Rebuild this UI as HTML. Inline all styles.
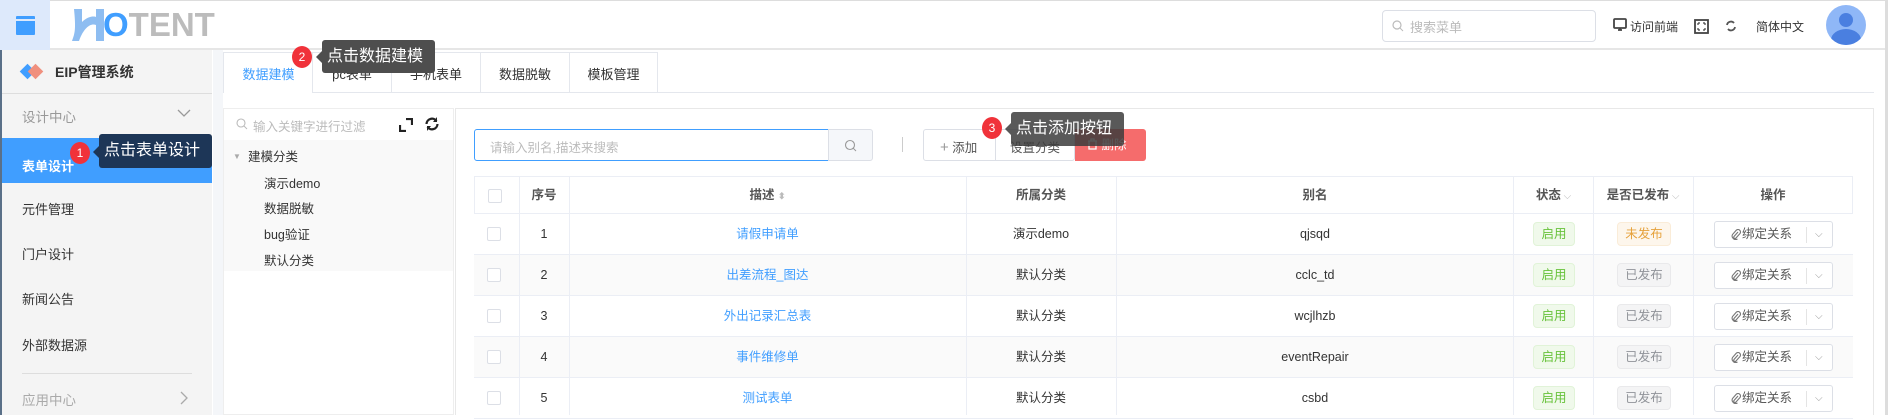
<!DOCTYPE html>
<html><head><meta charset="utf-8"><style>
*{box-sizing:border-box;margin:0;padding:0}
body{width:1888px;height:415px;overflow:hidden;background:#fff;font-family:"Liberation Sans","Noto Sans CJK SC",sans-serif;font-size:13px;color:#333;position:relative}
.a{position:absolute}
.hdr{left:0;top:0;width:1888px;height:50px;background:#fff;border-bottom:2px solid #e6e6e6;border-top:1px solid #ddd}
.side{left:0;top:50px;width:212px;height:365px;background:#f4f4f4;border-left:2px solid #5a7088}
.si{position:absolute;left:22px;font-size:13px;color:#333}
.tab{position:absolute;top:52px;height:41px;border:1px solid #e4e7ed;border-bottom:none;text-align:center;line-height:44px;color:#333;font-size:13px;background:#fff}
.th{position:absolute;top:177px;height:37px;line-height:37px;text-align:center;color:#555;font-weight:bold;font-size:12.5px}
.row{position:absolute;left:474px;width:1379px;height:41px;border-bottom:1px solid #ebeef5}
.c{position:absolute;top:0;height:40px;line-height:40px;text-align:center;font-size:12.5px;color:#333}
.vl{position:absolute;top:177px;height:238px;width:1px;background:#ebeef5}
.cb{position:absolute;left:13px;top:13px;width:14px;height:14px;border:1px solid #dcdfe6;border-radius:2px;background:#fff}
.tag{position:absolute;height:24px;line-height:22px;border:1px solid;border-radius:4px;font-size:12.5px;text-align:center}
.bind{position:absolute;left:1240px;top:7px;width:119px;height:27px;border:1px solid #dcdfe6;border-radius:3px;background:#fff;font-size:12.5px;color:#555;line-height:25px}
.bind svg{position:absolute;left:16px;top:7px}
.tip{position:absolute;color:#fff;font-size:16px;border-radius:3px;line-height:33px;padding-left:5px}
.badge{position:absolute;width:20px;height:22px;border-radius:50%;background:#f0323a;color:#fff;font-size:12px;text-align:center;line-height:22px}
</style></head><body>
<div class="a hdr"></div>
<div class="a" style="left:0;top:0;width:50px;height:50px;background:#dde9fb"></div>
<div class="a" style="left:16px;top:16px;width:19px;height:19px;background:#409eff;border-radius:1px"></div>
<div class="a" style="left:16px;top:19px;width:19px;height:1.5px;background:#dde9fb"></div>
<svg class="a" style="left:68px;top:7px" width="40" height="36"><path d="M6 2h8v13c6-6 12-6 14-5V2h8v32h-8V18c-5-2-12 2-17 16H4c3-8 4-12 2-32z" fill="#7ab2ee" opacity=".85"/></svg>
<div class="a" style="left:103px;top:8px;font-size:33px;font-weight:bold;line-height:34px"><span style="color:#409eff">O</span><span style="color:#bcbcbc">TENT</span></div>
<div class="a" style="left:1382px;top:10px;width:214px;height:32px;border:1px solid #dcdfe6;border-radius:4px"></div>
<svg class="a" style="left:1392px;top:20px" width="12" height="12"><circle cx="5" cy="5" r="4" stroke="#bbb" fill="none" stroke-width="1.2"/><path d="M8 8l3 3" stroke="#bbb"/></svg>
<div class="a" style="left:1410px;top:17px;color:#bbb;font-size:13px">搜索菜单</div>
<svg class="a" style="left:1613px;top:18px" width="14" height="14"><rect x="1" y="1" width="12" height="9" rx="1" fill="none" stroke="#444" stroke-width="1.8"/><path d="M5 12h4M7 10v2" stroke="#444" stroke-width="1.8"/></svg>
<div class="a" style="left:1630px;top:18px;font-size:12px;color:#333">访问前端</div>
<svg class="a" style="left:1694px;top:19px" width="15" height="15"><rect x="1" y="1" width="13" height="13" fill="none" stroke="#444" stroke-width="1.8"/><path d="M4 4h2M4 4v2M11 4h-2M11 4v2M4 11h2M4 11v-2M11 11h-2M11 11v-2" stroke="#444" stroke-width="1.2"/></svg>
<svg class="a" style="left:1725px;top:20px" width="12" height="12"><path d="M2 5a4 4 0 0 1 7-2M10 7a4 4 0 0 1-7 2" stroke="#555" stroke-width="1.8" fill="none"/></svg>
<div class="a" style="left:1756px;top:18px;font-size:12px;color:#333">简体中文</div>
<div class="a" style="left:1826px;top:5px;width:40px;height:40px;border-radius:50%;background:#8fb7f7;overflow:hidden"><div class="a" style="left:13px;top:8px;width:14px;height:14px;border-radius:50%;background:#4a7fe0"></div><div class="a" style="left:5px;top:24px;width:30px;height:22px;border-radius:50%;background:#4a7fe0"></div></div>
<div class="a" style="left:1885px;top:0;width:3px;height:415px;background:#ddd"></div>

<div class="a side"></div>
<div class="a" style="left:22px;top:66px;width:11px;height:11px;background:#409eff;transform:rotate(45deg)"></div>
<div class="a" style="left:30px;top:66px;width:11px;height:11px;background:#f0907e;transform:rotate(45deg)"></div>
<div class="si" style="left:55px;top:62px;font-weight:bold;font-size:14px">EIP管理系统</div>
<div class="a" style="left:2px;top:93px;width:210px;height:1px;background:#ddd"></div>
<div class="si" style="top:106px;color:#999;font-size:13.5px">设计中心</div>
<svg class="a" style="left:177px;top:109px" width="14" height="9"><path d="M1 1l6 6 6-6" stroke="#999" fill="none" stroke-width="1.3"/></svg>
<div class="a" style="left:2px;top:138px;width:210px;height:45px;background:#409eff"></div>
<div class="si" style="top:156px;color:#fff;font-weight:bold">表单设计</div>
<div class="si" style="top:199px">元件管理</div>
<div class="si" style="top:244px">门户设计</div>
<div class="si" style="top:289px">新闻公告</div>
<div class="si" style="top:335px">外部数据源</div>
<div class="a" style="left:22px;top:373px;width:170px;height:1px;background:#ddd"></div>
<div class="si" style="top:389px;color:#aaa;font-size:13.5px">应用中心</div>
<svg class="a" style="left:180px;top:391px" width="8" height="14"><path d="M1 1l6 6-6 6" stroke="#aaa" fill="none" stroke-width="1.3"/></svg>

<div class="a" style="left:213px;top:50px;width:10px;height:365px;background:#f4f6f9"></div>
<div class="tab" style="left:223px;width:90px;color:#409eff;border-right:none">数据建模</div>
<div class="tab" style="left:312px;width:80px;border-bottom:1px solid #e4e7ed">pc表单</div>
<div class="tab" style="left:391px;width:90px;border-bottom:1px solid #e4e7ed">手机表单</div>
<div class="tab" style="left:480px;width:90px;border-bottom:1px solid #e4e7ed">数据脱敏</div>
<div class="tab" style="left:569px;width:89px;border-bottom:1px solid #e4e7ed">模板管理</div>
<div class="a" style="left:658px;top:92px;width:1216px;height:1px;background:#e4e7ed"></div>

<div class="a" style="left:223px;top:108px;width:231px;height:307px;border:1px solid #eee;background:#fff"></div>
<div class="a" style="left:224px;top:140px;width:229px;height:131px;background:#f9f9f9"></div>
<svg class="a" style="left:236px;top:118px" width="12" height="12"><circle cx="5" cy="5" r="4" stroke="#bbb" fill="none" stroke-width="1.1"/><path d="M8 8l3 3" stroke="#bbb"/></svg>
<div class="a" style="left:253px;top:116px;color:#bbb;font-size:12.5px">输入关键字进行过滤</div>
<svg class="a" style="left:399px;top:118px" width="14" height="14"><path d="M1 7v6h6M13 7V1H7" stroke="#222" stroke-width="2.2" fill="none"/></svg>
<svg class="a" style="left:424px;top:116px" width="16" height="16"><path d="M2.5 8a5.5 5.5 0 0 1 10-3M13.5 8a5.5 5.5 0 0 1-10 3" stroke="#222" stroke-width="2.2" fill="none"/><path d="M13 1v5h-4z M3 15v-5h4z" fill="#222"/></svg>
<div class="a" style="left:233px;top:152px;color:#aaa;font-size:8px">▼</div>
<div class="a" style="left:248px;top:146px;font-size:12.5px">建模分类</div>
<div class="a" style="left:264px;top:173px;font-size:12.5px">演示demo</div>
<div class="a" style="left:264px;top:198px;font-size:12.5px">数据脱敏</div>
<div class="a" style="left:264px;top:224px;font-size:12.5px">bug验证</div>
<div class="a" style="left:264px;top:250px;font-size:12.5px">默认分类</div>

<div class="a" style="left:455px;top:108px;width:1419px;height:307px;border:1px solid #e8e8e8;border-bottom:none"></div>
<div class="a" style="left:474px;top:129px;width:355px;height:32px;border:1px solid #409eff;border-radius:3px 0 0 3px"></div>
<div class="a" style="left:490px;top:137px;color:#bbb;font-size:12.5px">请输入别名,描述来搜索</div>
<div class="a" style="left:828px;top:129px;width:45px;height:32px;border:1px solid #dcdfe6;background:#f5f7fa;border-radius:0 3px 3px 0"></div>
<svg class="a" style="left:844px;top:139px" width="13" height="13"><circle cx="6" cy="6" r="4.5" stroke="#999" fill="none" stroke-width="1.1"/><path d="M9 9l3 3" stroke="#999"/></svg>
<div class="a" style="left:902px;top:137px;width:1px;height:15px;background:#ccc"></div>
<div class="a" style="left:923px;top:129px;width:152px;height:32px;border:1px solid #dcdfe6;border-radius:3px;background:#fff"></div>
<div class="a" style="left:995px;top:129px;width:1px;height:32px;background:#dcdfe6"></div>
<div class="a" style="left:940px;top:137px;font-size:12.5px;color:#555"><span style="color:#999;font-size:15px">+</span> 添加</div>
<div class="a" style="left:1010px;top:137px;font-size:12.5px;color:#555">设置分类</div>
<div class="a" style="left:1075px;top:129px;width:71px;height:32px;background:#f56c6c;border-radius:0 3px 3px 0;color:#fff;font-size:12.5px;line-height:32px;padding-left:12px"><svg width="11" height="12" style="vertical-align:-1px"><path d="M1 3h9M4 3V1h3v2M2 3v8h7V3" stroke="#fff" fill="none" stroke-width="1.3"/></svg> 删除</div>

<div class="a" style="left:474px;top:176px;width:1379px;height:239px;border:1px solid #ebeef5;border-bottom:none"></div>
<div class="a" style="left:474px;top:213px;width:1379px;height:1px;background:#ebeef5"></div>
<div class="a" style="left:488px;top:189px;width:14px;height:14px;border:1px solid #dcdfe6;border-radius:2px"></div>
<div class="th" style="left:519px;width:50px">序号</div>
<div class="th" style="left:569px;width:397px">描述 <span style="color:#bbb;font-size:9px">⬍</span></div>
<div class="th" style="left:966px;width:150px">所属分类</div>
<div class="th" style="left:1116px;width:398px">别名</div>
<div class="th" style="left:1514px;width:79px">状态<span style="color:#bbb;font-weight:normal;font-size:10px"> ⌵</span></div>
<div class="th" style="left:1593px;width:100px">是否已发布<span style="color:#bbb;font-weight:normal;font-size:10px"> ⌵</span></div>
<div class="th" style="left:1693px;width:160px">操作</div>

<div class="row" style="top:214px;background:#fff"><div class="cb"></div><div class="c" style="left:45px;width:50px">1</div><div class="c" style="left:95px;width:397px;color:#409eff">请假申请单</div><div class="c" style="left:492px;width:150px">演示demo</div><div class="c" style="left:642px;width:398px">qjsqd</div><div class="tag" style="left:1059px;top:8px;width:42px;color:#67c23a;background:#f0f9eb;border-color:#e1f3d8">启用</div><div class="tag" style="left:1143px;top:8px;width:54px;color:#e6a23c;background:#fdf6ec;border-color:#faecd8">未发布</div><div class="bind"><svg width="10" height="11"><path d="M7 3L3 7.5a1.2 1.2 0 0 0 2 1.5L9 4.5a2.5 2.5 0 0 0-4-3L1.5 5.5a3.5 3.5 0 0 0 5 4.5" stroke="#777" fill="none" stroke-width="1.1"/></svg><span style="position:absolute;left:27px">绑定关系</span><span style="position:absolute;left:91px;top:5px;width:1px;height:16px;background:#e4e4e4"></span><span style="position:absolute;left:100px;color:#999;font-size:10px">⌵</span></div></div>
<div class="row" style="top:255px;background:#fafafa"><div class="cb"></div><div class="c" style="left:45px;width:50px">2</div><div class="c" style="left:95px;width:397px;color:#409eff">出差流程_图达</div><div class="c" style="left:492px;width:150px">默认分类</div><div class="c" style="left:642px;width:398px">cclc_td</div><div class="tag" style="left:1059px;top:8px;width:42px;color:#67c23a;background:#f0f9eb;border-color:#e1f3d8">启用</div><div class="tag" style="left:1143px;top:8px;width:54px;color:#909399;background:#f4f4f5;border-color:#e9e9eb">已发布</div><div class="bind"><svg width="10" height="11"><path d="M7 3L3 7.5a1.2 1.2 0 0 0 2 1.5L9 4.5a2.5 2.5 0 0 0-4-3L1.5 5.5a3.5 3.5 0 0 0 5 4.5" stroke="#777" fill="none" stroke-width="1.1"/></svg><span style="position:absolute;left:27px">绑定关系</span><span style="position:absolute;left:91px;top:5px;width:1px;height:16px;background:#e4e4e4"></span><span style="position:absolute;left:100px;color:#999;font-size:10px">⌵</span></div></div>
<div class="row" style="top:296px;background:#fff"><div class="cb"></div><div class="c" style="left:45px;width:50px">3</div><div class="c" style="left:95px;width:397px;color:#409eff">外出记录汇总表</div><div class="c" style="left:492px;width:150px">默认分类</div><div class="c" style="left:642px;width:398px">wcjlhzb</div><div class="tag" style="left:1059px;top:8px;width:42px;color:#67c23a;background:#f0f9eb;border-color:#e1f3d8">启用</div><div class="tag" style="left:1143px;top:8px;width:54px;color:#909399;background:#f4f4f5;border-color:#e9e9eb">已发布</div><div class="bind"><svg width="10" height="11"><path d="M7 3L3 7.5a1.2 1.2 0 0 0 2 1.5L9 4.5a2.5 2.5 0 0 0-4-3L1.5 5.5a3.5 3.5 0 0 0 5 4.5" stroke="#777" fill="none" stroke-width="1.1"/></svg><span style="position:absolute;left:27px">绑定关系</span><span style="position:absolute;left:91px;top:5px;width:1px;height:16px;background:#e4e4e4"></span><span style="position:absolute;left:100px;color:#999;font-size:10px">⌵</span></div></div>
<div class="row" style="top:337px;background:#fafafa"><div class="cb"></div><div class="c" style="left:45px;width:50px">4</div><div class="c" style="left:95px;width:397px;color:#409eff">事件维修单</div><div class="c" style="left:492px;width:150px">默认分类</div><div class="c" style="left:642px;width:398px">eventRepair</div><div class="tag" style="left:1059px;top:8px;width:42px;color:#67c23a;background:#f0f9eb;border-color:#e1f3d8">启用</div><div class="tag" style="left:1143px;top:8px;width:54px;color:#909399;background:#f4f4f5;border-color:#e9e9eb">已发布</div><div class="bind"><svg width="10" height="11"><path d="M7 3L3 7.5a1.2 1.2 0 0 0 2 1.5L9 4.5a2.5 2.5 0 0 0-4-3L1.5 5.5a3.5 3.5 0 0 0 5 4.5" stroke="#777" fill="none" stroke-width="1.1"/></svg><span style="position:absolute;left:27px">绑定关系</span><span style="position:absolute;left:91px;top:5px;width:1px;height:16px;background:#e4e4e4"></span><span style="position:absolute;left:100px;color:#999;font-size:10px">⌵</span></div></div>
<div class="row" style="top:378px;background:#fff"><div class="cb"></div><div class="c" style="left:45px;width:50px">5</div><div class="c" style="left:95px;width:397px;color:#409eff">测试表单</div><div class="c" style="left:492px;width:150px">默认分类</div><div class="c" style="left:642px;width:398px">csbd</div><div class="tag" style="left:1059px;top:8px;width:42px;color:#67c23a;background:#f0f9eb;border-color:#e1f3d8">启用</div><div class="tag" style="left:1143px;top:8px;width:54px;color:#909399;background:#f4f4f5;border-color:#e9e9eb">已发布</div><div class="bind"><svg width="10" height="11"><path d="M7 3L3 7.5a1.2 1.2 0 0 0 2 1.5L9 4.5a2.5 2.5 0 0 0-4-3L1.5 5.5a3.5 3.5 0 0 0 5 4.5" stroke="#777" fill="none" stroke-width="1.1"/></svg><span style="position:absolute;left:27px">绑定关系</span><span style="position:absolute;left:91px;top:5px;width:1px;height:16px;background:#e4e4e4"></span><span style="position:absolute;left:100px;color:#999;font-size:10px">⌵</span></div></div>
<div class="vl" style="left:519px"></div><div class="vl" style="left:569px"></div><div class="vl" style="left:966px"></div><div class="vl" style="left:1116px"></div><div class="vl" style="left:1513px"></div><div class="vl" style="left:1593px"></div><div class="vl" style="left:1693px"></div>

<div class="tip" style="left:99px;top:134px;width:113px;height:34px;background:#1d3657">点击表单设计</div>
<div class="a" style="left:93px;top:146px;border:6px solid transparent;border-right-color:#1d3657;border-left:none"></div>
<div class="badge" style="left:70px;top:142px">1</div>
<div class="tip" style="left:322px;top:40px;width:113px;height:33px;background:#4e4e4e">点击数据建模</div>
<div class="a" style="left:316px;top:51px;border:6px solid transparent;border-right-color:#4e4e4e;border-left:none"></div>
<div class="badge" style="left:292px;top:46px">2</div>
<div class="tip" style="left:1011px;top:112px;width:113px;height:34px;background:rgba(60,60,60,.85)">点击添加按钮</div>
<div class="a" style="left:1005px;top:123px;border:6px solid transparent;border-right-color:rgba(60,60,60,.85);border-left:none"></div>
<div class="badge" style="left:982px;top:117px">3</div>
</body></html>
